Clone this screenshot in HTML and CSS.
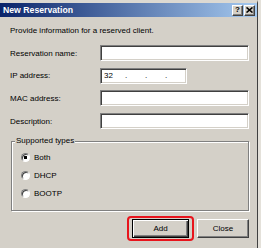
FILE: index.html
```html
<!DOCTYPE html>
<html lang="en">
<head>
    <meta charset="UTF-8">
    <title>New Reservation</title>
    <link rel="stylesheet" href="styles.css">
</head>
<body>
    <div class="screen">
        <div class="window">
            <div class="titlebar">
                <span class="title">New Reservation</span>
                <div class="caption-buttons">
                    <span class="cap-btn">?</span>
                    <span class="cap-btn">
                        <svg width="7" height="6" viewBox="0 0 7 6"><path d="M0.5 0.5 L6.5 5.5 M6.5 0.5 L0.5 5.5" stroke="#000" stroke-width="1.6"/></svg>
                    </span>
                </div>
            </div>
            <div class="content">
                <p class="intro">Provide information for a reserved client.</p>
                <div class="fields">
                    <label class="field-label">Reservation name:</label>
                    <div class="textbox"></div>
                    <label class="field-label">IP address:</label>
                    <div class="textbox ip"><span class="oct">32</span><span class="dot">.</span><span class="dot">.</span><span class="dot">.</span></div>
                    <label class="field-label">MAC address:</label>
                    <div class="textbox"></div>
                    <label class="field-label">Description:</label>
                    <div class="textbox"></div>
                </div>
                <fieldset class="group">
                    <legend>Supported types</legend>
                    <div class="radio-row"><span class="radio checked"></span>Both</div>
                    <div class="radio-row"><span class="radio"></span>DHCP</div>
                    <div class="radio-row"><span class="radio"></span>BOOTP</div>
                </fieldset>
                <div class="actions">
                    <div class="highlight"><button class="btn default">Add</button></div>
                    <button class="btn close">Close</button>
                </div>
            </div>
        </div>
        <div class="edge"></div>
    </div>
</body>
</html>
```

FILE: styles.css
```css
body {
    margin: 0;
    background: #d4d0c8;
    font-family: "Liberation Sans", Arial, sans-serif;
    font-size: 8px;
    color: #000;
    overflow: hidden;
}
.screen {
    display: flex;
    width: 261px;
    height: 248px;
}
.window {
    width: 257px;
    border-top: 3px solid #dcd9d2;
    border-right: 1px solid #404040;
    background: #d4d0c8;
}
.titlebar {
    height: 14px;
    background: linear-gradient(to right, #0a246a, #a6caf0);
    display: flex;
    align-items: center;
    justify-content: space-between;
    padding: 0 2px 0 3px;
}
.title {
    color: #fff;
    font-weight: bold;
    font-size: 8.7px;
}
.caption-buttons {
    display: flex;
    gap: 1px;
}
.cap-btn {
    width: 11px;
    height: 11px;
    box-sizing: border-box;
    background: #d4d0c8;
    border: 1px solid;
    border-color: #fff #404040 #404040 #fff;
    box-shadow: inset -1px -1px 0 #808080;
    display: flex;
    align-items: center;
    justify-content: center;
    font-weight: bold;
    font-size: 8px;
    line-height: 8px;
}
.content {
    padding: 8px 0 0 10px;
    width: 239px;
}
.intro {
    margin: 0;
    line-height: 12px;
}
.fields {
    display: grid;
    grid-template-columns: 90px 149px;
    row-gap: 6.7px;
    margin-top: 8px;
    align-items: center;
}
.textbox {
    height: 16px;
    box-sizing: border-box;
    background: #fff;
    border: 1px solid;
    border-color: #808080 #fff #fff #808080;
    box-shadow: inset 1px 1px 0 #404040, inset -1px -1px 0 #d4d0c8;
}
.textbox.ip {
    width: 87px;
    display: flex;
    align-items: center;
    padding-left: 3px;
}
.oct {
    width: 21px;
}
.dot {
    width: 20px;
}
.group {
    margin: 7px 0 0 1px;
    border: 1px solid #808080;
    box-shadow: inset 1px 1px 0 #fff, 1px 1px 0 #fff;
    padding: 5px 0 11px 9px;
    display: flex;
    flex-direction: column;
    gap: 6px;
}
.group legend {
    margin-left: -6px;
    padding: 0 1px;
    line-height: 10px;
    background: #d4d0c8;
}
.radio-row {
    display: flex;
    align-items: center;
    gap: 4px;
    height: 12px;
}
.radio {
    width: 9px;
    height: 9px;
    box-sizing: border-box;
    border-radius: 50%;
    background: #fff;
    border: 1px solid;
    border-color: #808080 #fff #fff #808080;
    box-shadow: inset 1px 1px 0 #404040;
}
.radio.checked {
    background: radial-gradient(circle, #000 1.4px, #fff 2px);
}
.actions {
    display: flex;
    justify-content: flex-end;
    align-items: center;
    gap: 3px;
    margin-top: 5px;
}
.highlight {
    display: flex;
    border: 2px solid #e8141c;
    border-radius: 4px;
    padding: 1px 3px;
}
.btn {
    font-family: inherit;
    font-size: 8px;
    height: 19px;
    padding: 0;
    background: #d4d0c8;
    border: 1px solid;
    border-color: #fff #404040 #404040 #fff;
    box-shadow: inset -1px -1px 0 #808080;
    color: #000;
}
.btn.default {
    width: 57px;
    border-color: #000;
    box-shadow: inset 1px 1px 0 #fff, inset -1px -1px 0 #404040, inset -2px -2px 0 #808080;
}
.btn.close {
    width: 52px;
}
.edge {
    width: 3px;
    background: #e4e1da;
}
```
